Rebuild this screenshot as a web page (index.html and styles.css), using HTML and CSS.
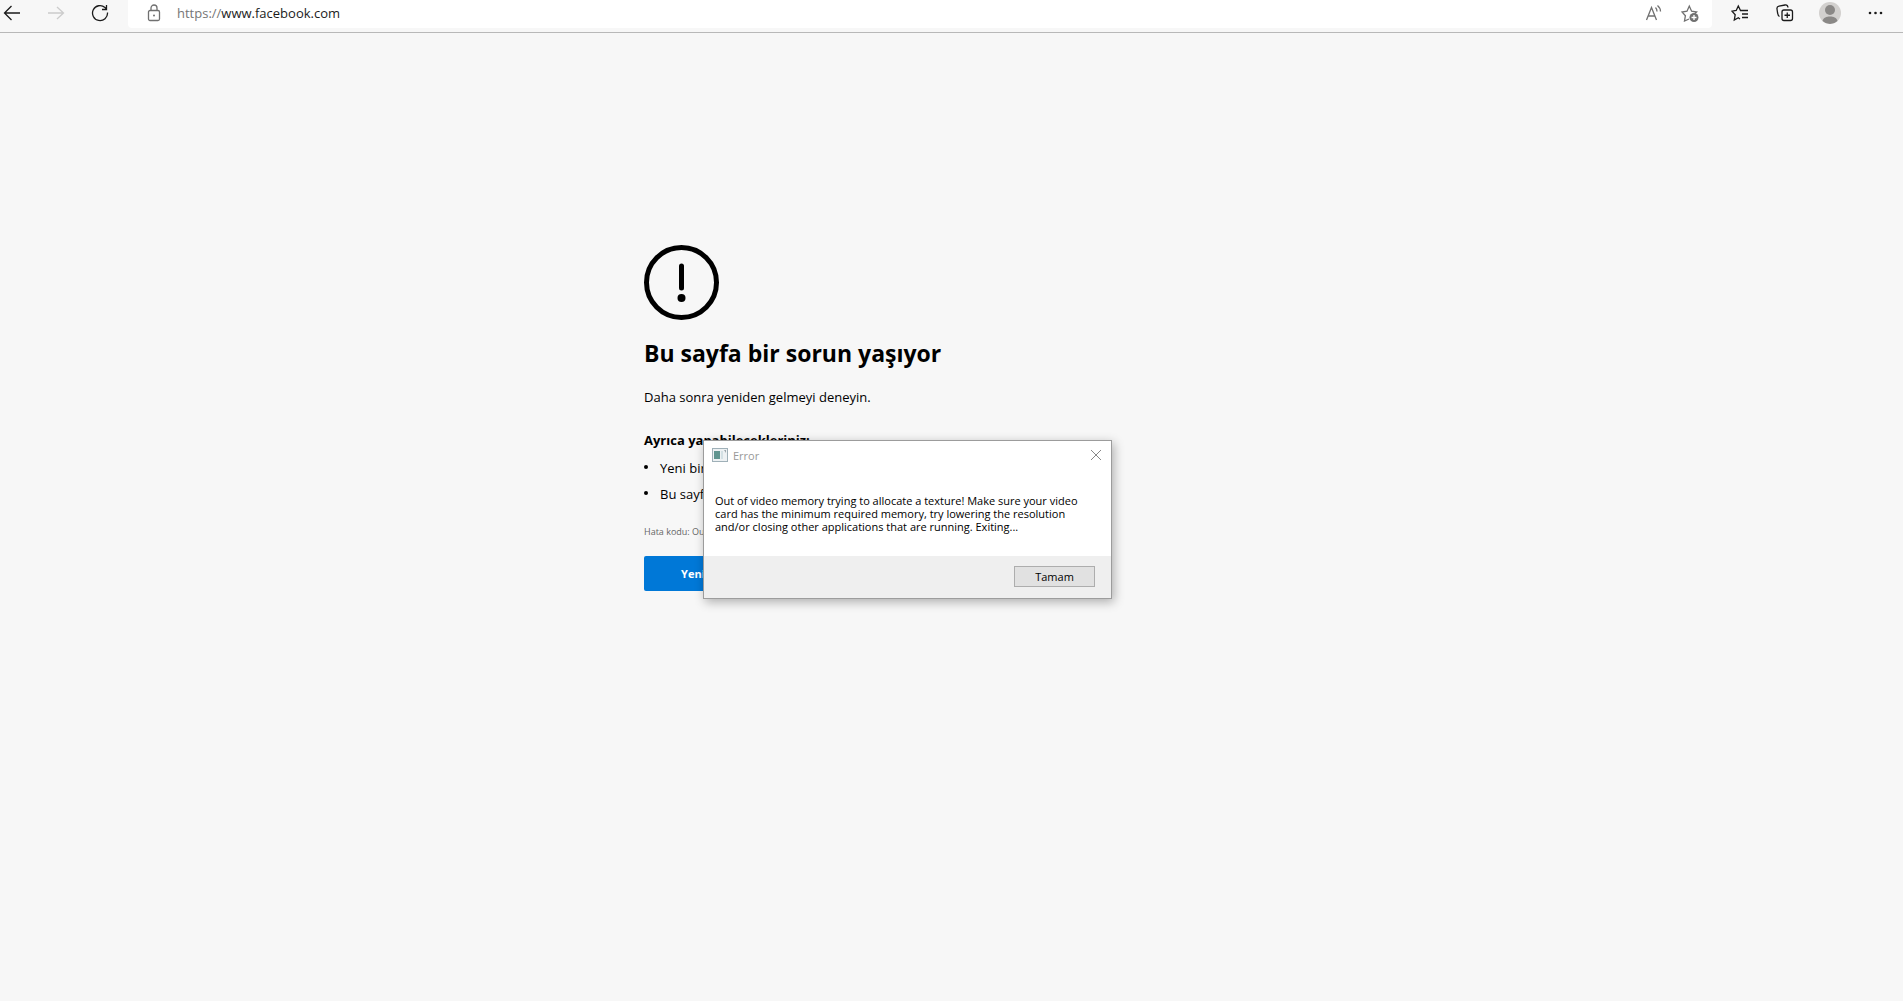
FILE: index.html
```html
<!DOCTYPE html>
<html lang="tr">
<head>
    <meta charset="UTF-8">
    <meta name="viewport" content="width=device-width, initial-scale=1.0">
    <title>Bu sayfa bir sorun yaşıyor</title>
    <link rel="stylesheet" href="styles.css">
</head>
<body>
    <header class="toolbar">
        <nav class="nav-buttons">
            <button class="icon-button" type="button" aria-label="Geri">
                <svg width="18" height="18" viewBox="0 0 18 18"><path d="M17 9H1.500M8.500 2L1.500 9l7 7"/></svg>
            </button>
            <button class="icon-button" type="button" aria-label="İleri" disabled>
                <svg width="18" height="18" viewBox="0 0 18 18"><path d="M1 9h15.500M10 3l6.500 6-6.500 6"/></svg>
            </button>
            <button class="icon-button" type="button" aria-label="Yenile">
                <svg width="18" height="18" viewBox="0 0 18 18"><path d="M16.500 8.500A7.500 7.500 0 1 1 14 3.500l1.500 1.500M15.500 1v4.500H11"/></svg>
            </button>
        </nav>
        <div class="address-bar">
            <svg class="lock" width="14" height="18" viewBox="0 0 14 18"><rect x="1.500" y="6.500" width="11" height="10" rx="1.500"/><path d="M4 6.500V4a3 3 0 0 1 6 0v2.500"/><circle class="fill" cx="7" cy="11.500" r="1"/></svg>
            <a class="url" href="#"><span class="scheme">https://</span>www.facebook.com</a>
            <button class="icon-button muted" type="button" aria-label="Sesli oku">
                <svg width="18" height="18" viewBox="0 0 18 18"><path d="M1.500 16L6.500 3.500 11.500 16M3.200 12h6.600M10.500 3.500q1.500 1.500 1.500 4M12.500 1.500q3 2.500 3 6"/></svg>
            </button>
            <button class="icon-button muted" type="button" aria-label="Sık kullanılanlara ekle">
                <svg width="18" height="18" viewBox="0 0 18 18"><path d="M8 15l-4.500 2 .9-5.300L1 8l5-.8L8.300 2l2.300 5.200 5 .8-1.600 1.500"/><circle class="fill" cx="13" cy="13.500" r="4.500"/><path class="plus" d="M13 11v5M10.500 13.500h5"/></svg>
            </button>
        </div>
        <div class="tools">
            <button class="icon-button" type="button" aria-label="Sık kullanılanlar">
                <svg width="18" height="18" viewBox="0 0 18 18"><path d="M12 6.500H9.500L7.300 2 5.200 6.500 1 7.200l3.200 3.500-.9 5.300 4-2.300L9 15M11 6.500h6M11 10h6M11 13.500h6"/></svg>
            </button>
            <button class="icon-button" type="button" aria-label="Koleksiyonlar">
                <svg width="18" height="18" viewBox="0 0 18 18"><rect x="6" y="6" width="10.500" height="10.500" rx="2"/><path d="M11.250 8.500v5.500M8.500 11.250h5.500M3.500 12.500C2 12 2 11 1.500 8.500L1 5C.7 3.200 1.500 2.500 3 2.200l6-1.200C11 .7 11.700 1.500 12 3.500"/></svg>
            </button>
            <button class="icon-button" type="button" aria-label="Profil">
                <svg class="avatar" width="22" height="22" viewBox="0 0 22 22"><circle cx="11" cy="11" r="11" fill="#d2d0ce"/><circle cx="11" cy="8" r="5" fill="#8a8886"/><path d="M3.500 19c1-3.500 4-4.500 7.500-4.500s6.500 1 7.500 4.500a11 11 0 0 1-15 0z" fill="#8a8886"/></svg>
            </button>
            <button class="icon-button" type="button" aria-label="Ayarlar ve daha fazlası">
                <svg width="18" height="18" viewBox="0 0 18 18"><circle class="fill" cx="4" cy="9" r="1.300"/><circle class="fill" cx="9.500" cy="9" r="1.300"/><circle class="fill" cx="15" cy="9" r="1.300"/></svg>
            </button>
        </div>
    </header>

    <main class="error-page">
        <svg class="error-icon" width="75" height="75" viewBox="0 0 75 75"><circle cx="37.500" cy="37.500" r="35" fill="none" stroke="#000" stroke-width="5"/><path d="M37.500 21v22" stroke="#000" stroke-width="5" stroke-linecap="round"/><circle cx="37.500" cy="53" r="4"/></svg>
        <h1>Bu sayfa bir sorun yaşıyor</h1>
        <p class="summary">Daha sonra yeniden gelmeyi deneyin.</p>
        <h2>Ayrıca yapabilecekleriniz:</h2>
        <ul class="suggestions">
            <li>Yeni bir</li>
            <li>Bu sayfa</li>
        </ul>
        <p class="error-code">Hata kodu: Out</p>
        <button class="reload" type="button">Yenile</button>

        <div class="dialog" role="alertdialog" aria-labelledby="dialog-title" aria-describedby="dialog-text">
            <div class="dialog-header">
                <svg width="16" height="14" viewBox="0 0 16 14"><rect x=".5" y=".5" width="15" height="13" fill="#edf1f3" stroke="#9fb0b8"/><rect x="2" y="3" width="6" height="8" fill="#5f948f"/><path d="M9 3h2v8H9z" fill="#d3e0e4"/><path d="M12 2h2v3z" fill="#9aa5ab"/></svg>
                <span id="dialog-title" class="dialog-title">Error</span>
                <button class="dialog-close" type="button" aria-label="Kapat">
                    <svg width="12" height="12" viewBox="0 0 12 12"><path d="M1 1l10 10M11 1L1 11"/></svg>
                </button>
            </div>
            <p id="dialog-text" class="dialog-text">Out of video memory trying to allocate a texture! Make sure your video card has the minimum required memory, try lowering the resolution and/or closing other applications that are running. Exiting...</p>
            <div class="dialog-footer">
                <button class="dialog-ok" type="button">Tamam</button>
            </div>
        </div>
    </main>
</body>
</html>
```
FILE: styles.css
```css
* {
    box-sizing: border-box;
}

body {
    min-height: 100vh;
    margin: 0;
    background-color: #f7f7f7;
    color: #000;
    font-family: "Open Sans", "Noto Sans", sans-serif;
    font-size: 13px;
}

h1, h2, p, ul {
    margin: 0;
    padding: 0;
}

button {
    padding: 0;
    border: none;
    background: none;
    font-family: inherit;
}

/* browser toolbar */
.toolbar {
    display: flex;
    align-items: flex-start;
    height: 33px;
    border-bottom: 1px solid #b8b8b8;
}

.nav-buttons {
    display: flex;
    gap: 26px;
    width: 128px;
    padding-left: 3px;
}

.icon-button {
    display: flex;
    align-items: center;
    justify-content: center;
    width: 18px;
    height: 26px;
}

.icon-button svg,
.lock {
    flex-shrink: 0;
    fill: none;
    stroke: #1b1b1b;
    stroke-width: 1.3;
}

.icon-button:disabled svg {
    stroke: #ccc;
}

.muted svg,
.lock {
    stroke: #707070;
}

.icon-button .fill {
    fill: #1b1b1b;
    stroke: none;
}

.muted .fill,
.lock .fill {
    fill: #707070;
    stroke: none;
}

.muted .plus {
    stroke: #fff;
}

.icon-button .avatar {
    stroke: none;
}

.address-bar {
    flex: 1;
    display: flex;
    align-items: center;
    gap: 18px;
    height: 28px;
    padding: 0 13px 2px 19px;
    background: #fff;
    border-radius: 0 0 4px 4px;
}

.url {
    flex: 1;
    margin-left: -2px;
    color: #1b1b1b;
    line-height: 26px;
    text-decoration: none;
}

.scheme {
    color: #767676;
}

.tools {
    display: flex;
    gap: 27px;
    padding: 0 19px;
}

/* crashed page */
.error-page {
    position: relative;
    max-width: 615px;
    margin: 0 auto;
    padding-top: 212px;
}

.error-icon {
    display: block;
}

h1 {
    margin-top: 17px;
    font-size: 23px;
    font-weight: 700;
    line-height: 32px;
}

.summary {
    margin-top: 18px;
    line-height: 20px;
}

h2 {
    margin-top: 23px;
    font-size: 13px;
    font-weight: 700;
    line-height: 20px;
}

.suggestions {
    margin-top: 8px;
    padding-left: 16px;
    line-height: 20px;
    list-style: none;
}

.suggestions li {
    position: relative;
}

.suggestions li + li {
    margin-top: 6px;
}

.suggestions li::before {
    content: "";
    position: absolute;
    top: 7px;
    left: -16px;
    width: 4px;
    height: 4px;
    border-radius: 50%;
    background: #000;
}

.error-code {
    margin-top: 20px;
    color: #666;
    font-size: 9px;
    line-height: 16px;
}

.reload {
    width: 108px;
    height: 35px;
    margin-top: 16px;
    border-radius: 2px;
    background: #0078d7;
    color: #fff;
    font-size: 11px;
    font-weight: 700;
}

/* message box on top of the page */
.dialog {
    position: absolute;
    top: 407px;
    left: 59px;
    width: 409px;
    border: 1px solid #9c9c9c;
    background: #fff;
    box-shadow: 2px 3px 10px rgba(0, 0, 0, 0.3);
}

.dialog-header {
    display: flex;
    align-items: center;
    gap: 5px;
    height: 28px;
    padding: 0 9px 0 8px;
}

.dialog-title {
    flex: 1;
    color: #999;
    font-size: 11px;
}

.dialog-close {
    display: flex;
}

.dialog-close svg {
    fill: none;
    stroke: #888;
}

.dialog-text {
    padding: 25px 20px 23px 11px;
    font-size: 11px;
    line-height: 13px;
}

.dialog-footer {
    display: flex;
    justify-content: flex-end;
    padding: 10px 16px 11px;
    background: #efefef;
}

.dialog-ok {
    width: 81px;
    height: 21px;
    border: 1px solid #adadad;
    background: #e1e1e1;
    color: #000;
    font-size: 11px;
}
```
